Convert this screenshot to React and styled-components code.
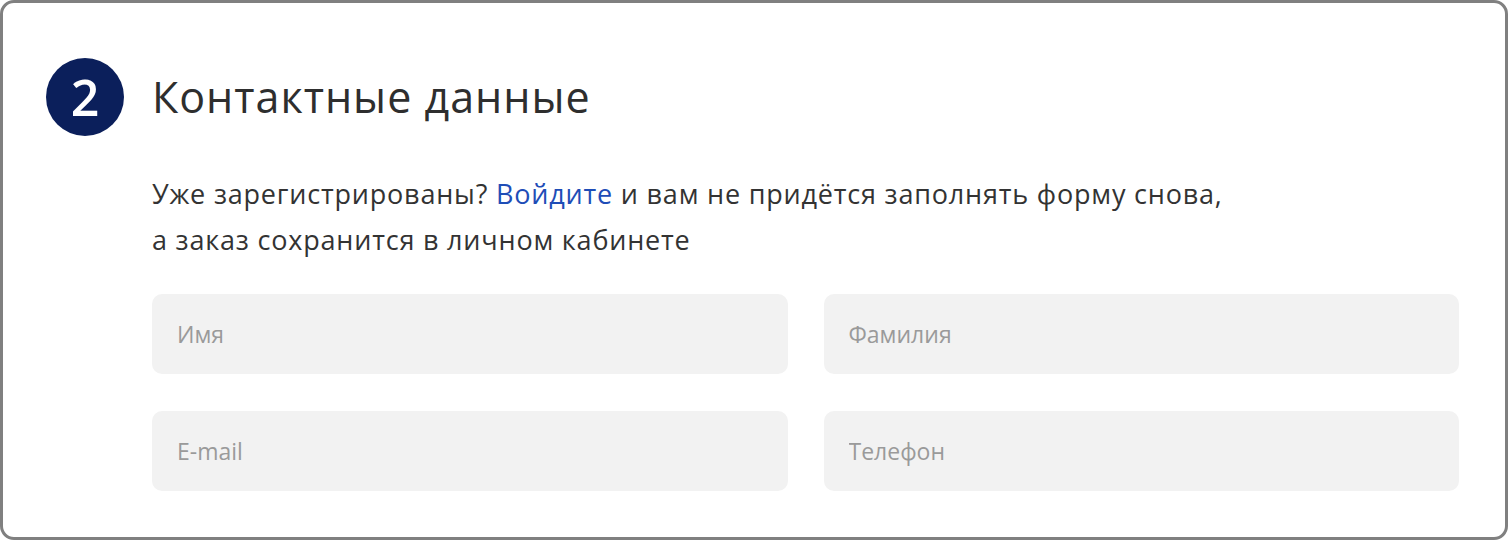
import React from 'react'
import styled, { createGlobalStyle } from 'styled-components'

const GlobalStyle = createGlobalStyle`
  body {
    margin: 0;
    background: #fff;
    font-family: "Open Sans", "Noto Sans", sans-serif;
  }
`

const Card = styled.section`
  box-sizing: border-box;
  width: 1508px;
  height: 540px;
  border: 3px solid #808080;
  border-radius: 14px;
  padding: 55px 46px 0 43px;
  background: #fff;
`

const Header = styled.div`
  display: flex;
  align-items: center;
  gap: 28px;
`

const StepBadge = styled.div`
  width: 78px;
  height: 78px;
  border-radius: 50%;
  background: #0b1f5b;
  color: #fff;
  display: flex;
  align-items: center;
  justify-content: center;
  font-size: 50px;
  font-weight: 600;
  line-height: 1;
  flex-shrink: 0;
`

const Title = styled.h2`
  margin: 0;
  font-size: 43px;
  font-weight: 500;
  letter-spacing: 1px;
  color: #2e2e2e;
  line-height: 1.2;
`

const Body = styled.div`
  margin-left: 106px;
`

const Lead = styled.p`
  margin: 35px 0 0;
  font-size: 27px;
  letter-spacing: 0.8px;
  line-height: 46px;
  color: #333;
  white-space: nowrap;
`

const Link = styled.a`
  color: #1e4db7;
  text-decoration: none;
`

const Fields = styled.div`
  display: grid;
  grid-template-columns: 1fr 1fr;
  column-gap: 36px;
  row-gap: 37px;
  margin-top: 31px;
`

const Input = styled.input`
  box-sizing: border-box;
  height: 80px;
  width: 100%;
  border: none;
  border-radius: 10px;
  background: #f2f2f2;
  padding: 0 25px;
  font-family: inherit;
  font-size: 23px;
  color: #333;
  outline: none;

  &::placeholder {
    color: #9a9a9a;
  }
`

export default function App () {
  const fields = ['Имя', 'Фамилия', 'E-mail', 'Телефон']

  return (
    <>
      <GlobalStyle />
      <Card>
        <Header>
          <StepBadge>2</StepBadge>
          <Title>Контактные данные</Title>
        </Header>
        <Body>
          <Lead>
            Уже зарегистрированы? <Link href='#'>Войдите</Link> и вам не придётся заполнять форму снова,
            <br />
            а заказ сохранится в личном кабинете
          </Lead>
          <Fields>
            {fields.map(name => (
              <Input key={name} placeholder={name} />
            ))}
          </Fields>
        </Body>
      </Card>
    </>
  )
}
